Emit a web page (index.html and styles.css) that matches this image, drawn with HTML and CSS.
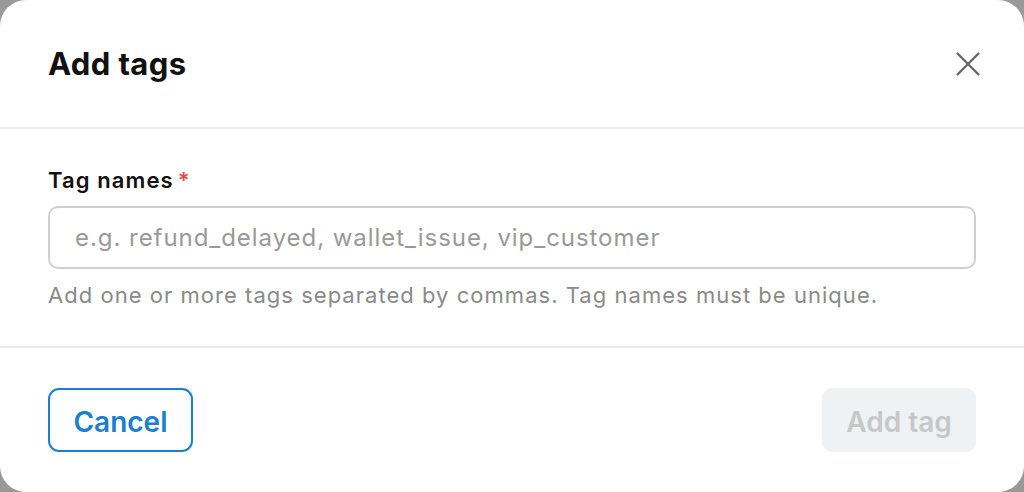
FILE: index.html
```html
<!DOCTYPE html>
<html lang="en">
<head>
<meta charset="utf-8">
<title>Add tags</title>
<link rel="stylesheet" href="styles.css">
</head>
<body>
<div class="modal">
  <header class="modal-header">
    <h1 class="title">Add tags</h1>
    <button class="close" aria-label="Close">
      <svg width="24" height="24" viewBox="0 0 24 24" fill="none" stroke="#666" stroke-width="2.4" stroke-linecap="butt">
        <path d="M1 1 L23 23 M23 1 L1 23"/>
      </svg>
    </button>
  </header>
  <section class="modal-body">
    <label class="label">Tag names<span class="req">*</span></label>
    <div class="input">e.g. refund_delayed, wallet_issue, vip_customer</div>
    <p class="hint">Add one or more tags separated by commas. Tag names must be unique.</p>
  </section>
  <footer class="modal-footer">
    <button class="btn btn-cancel">Cancel</button>
    <button class="btn btn-add">Add tag</button>
  </footer>
</div>
</body>
</html>
```

FILE: styles.css
```css
html, body {
  margin: 0;
  padding: 0;
  background: #999999;
}
body {
  width: 1024px;
  height: 492px;
  overflow: hidden;
  font-family: Inter, "Noto Sans", sans-serif;
}
.modal {
  width: 1024px;
  height: 492px;
  background: #ffffff;
  border-radius: 26px;
  display: flex;
  flex-direction: column;
  overflow: hidden;
}
.modal-header {
  height: 129px;
  box-sizing: border-box;
  display: flex;
  align-items: center;
  justify-content: space-between;
  padding: 0 39px 0 48px;
  border-bottom: 2px solid #ebebeb;
}
.title {
  margin: 0;
  font-size: 31px;
  font-weight: 700;
  color: #111111;
  letter-spacing: 0.4px;
}
.close {
  background: none;
  border: 0;
  padding: 0;
  width: 34px;
  height: 34px;
  display: flex;
  align-items: center;
  justify-content: center;
}
.modal-body {
  padding: 37px 48px 0 48px;
  height: 219px;
  box-sizing: border-box;
  border-bottom: 2px solid #ebebeb;
}
.label {
  display: block;
  font-size: 22px;
  font-weight: 600;
  color: #111111;
  line-height: 28px;
  letter-spacing: 1.1px;
}
.req {
  color: #e5484d;
  margin-left: 4px;
  letter-spacing: 0;
}
.input {
  margin-top: 12px;
  height: 63px;
  box-sizing: border-box;
  border: 2px solid #d0d0d0;
  border-radius: 10px;
  padding: 0 25px;
  display: flex;
  align-items: center;
  font-size: 24px;
  letter-spacing: 0.95px;
  color: #999999;
}
.hint {
  margin: 11px 0 0 0;
  font-size: 22px;
  letter-spacing: 1.03px;
  color: #8a8a8a;
  line-height: 30px;
}
.modal-footer {
  flex: 1;
  display: flex;
  align-items: center;
  justify-content: space-between;
  padding: 0 48px;
}
.btn {
  height: 64px;
  box-sizing: border-box;
  border-radius: 11px;
  font-family: Inter, "Noto Sans", sans-serif;
  font-size: 28px;
  font-weight: 600;
  padding: 4px 20px 0 20px;
  line-height: 34px;
}
.btn-cancel {
  background: #ffffff;
  border: 2px solid #1a7fd2;
  color: #1a7fd2;
  width: 145px;
}
.btn-add {
  background: #f0f1f3;
  border: 0;
  color: #c6c7c9;
  width: 154px;
}
```
